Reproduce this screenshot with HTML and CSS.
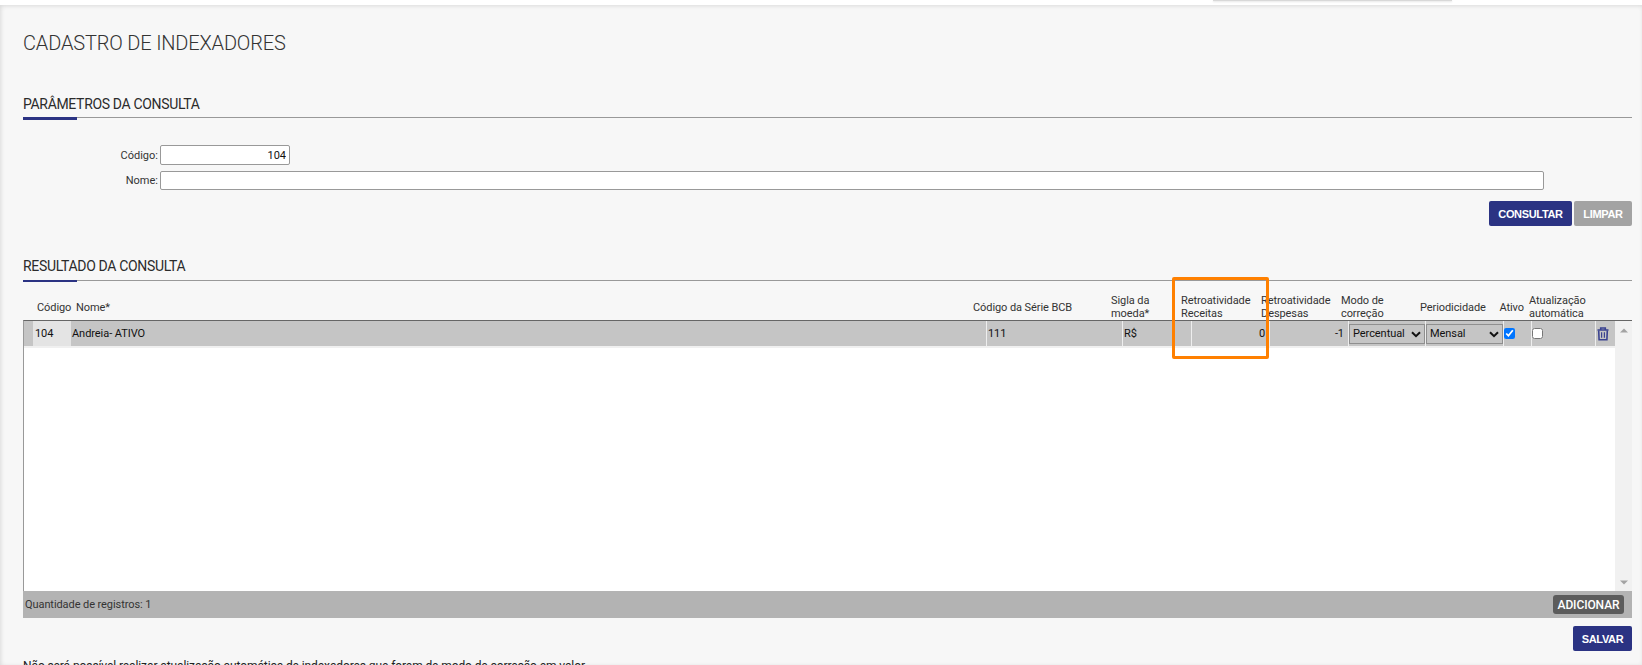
FILE: index.html
```html
<!DOCTYPE html>
<html lang="pt-BR">
<head>
    <meta charset="UTF-8">
    <title>Cadastro de Indexadores</title>
    <link rel="stylesheet" href="styles.css">
</head>
<body>
    <div class="topo"><div class="topo-aba"></div></div>
    <div class="pagina">
        <h1>CADASTRO DE INDEXADORES</h1>

        <h2 class="secao">PARÂMETROS DA CONSULTA</h2>
        <form class="filtros">
            <div class="campo">
                <label for="codigo">Código:</label>
                <input type="text" id="codigo" class="codigo" value="104">
            </div>
            <div class="campo">
                <label for="nome">Nome:</label>
                <input type="text" id="nome" class="nome">
            </div>
            <div class="botoes">
                <button type="button" class="botao consultar">CONSULTAR</button>
                <button type="button" class="botao limpar">LIMPAR</button>
            </div>
        </form>

        <h2 class="secao resultado">RESULTADO DA CONSULTA</h2>
        <div class="tabela">
            <div class="cabecalho">
                <span>Código</span>
                <span>Nome*</span>
                <span>Código da Série BCB</span>
                <span>Sigla da<br>moeda*</span>
                <span>Retroatividade<br>Receitas</span>
                <span>Retroatividade<br>Despesas</span>
                <span>Modo de<br>correção</span>
                <span>Periodicidade</span>
                <span>Ativo</span>
                <span>Atualização<br>automática</span>
            </div>
            <div class="corpo">
                <div class="linhas">
                    <div class="linha">
                        <div class="marca"></div>
                        <div class="bloqueado">104</div>
                        <div>Andreia- ATIVO</div>
                        <div>111</div>
                        <div>R$</div>
                        <div class="numero">0</div>
                        <div class="numero">-1</div>
                        <div class="lista">
                            <select><option>Percentual</option></select>
                            <svg width="10" height="7" viewBox="0 0 10 7"><path d="M1 1.2l4 4 4-4" fill="none" stroke="#111" stroke-width="2"/></svg>
                        </div>
                        <div class="lista">
                            <select><option>Mensal</option></select>
                            <svg width="10" height="7" viewBox="0 0 10 7"><path d="M1 1.2l4 4 4-4" fill="none" stroke="#111" stroke-width="2"/></svg>
                        </div>
                        <div class="marcador"><input type="checkbox" checked></div>
                        <div class="marcador"><input type="checkbox"></div>
                        <div class="excluir">
                            <svg width="12" height="14" viewBox="0 0 12 14" fill="none" stroke="#3a4290"><path d="M0.5 3h11M3.7 3V1h4.6v2" stroke-width="1.6"/><path d="M1.7 3.5l.4 9.2h7.8l.4-9.2" stroke-width="1.6"/><path d="M4.6 5.2v5.6M7.4 5.2v5.6" stroke-width="1.2"/></svg>
                        </div>
                    </div>
                </div>
                <div class="rolagem">
                    <svg width="8" height="5" viewBox="0 0 8 5"><path d="M0 4.5L4 .5l4 4z" fill="#a3a3a3"/></svg>
                    <svg width="8" height="5" viewBox="0 0 8 5"><path d="M0 .5l4 4 4-4z" fill="#a3a3a3"/></svg>
                </div>
            </div>
            <div class="rodape">
                <span>Quantidade de registros: 1</span>
                <button type="button" class="adicionar">ADICIONAR</button>
            </div>
            <div class="destaque"></div>
        </div>
        <div class="acoes">
            <button type="button" class="botao salvar">SALVAR</button>
        </div>
        <p class="aviso">Não será possível realizar atualização automática de indexadores que forem de modo de correção em valor.</p>
    </div>
</body>
</html>
```

FILE: styles.css
```css
* {
    box-sizing: border-box;
}
body {
    margin: 0;
    height: 665px;
    overflow: hidden;
    background-color: #ffffff;
    font-family: Roboto, Arial, sans-serif;
    font-size: 11px;
    color: #333;
}
.topo {
    height: 5px;
}
.topo-aba {
    width: 239px;
    height: 1px;
    margin-left: 1213px;
    background: #d8d8d8;
    box-shadow: 0 1px 2px #ddd;
}
.pagina {
    height: 660px;
    padding: 25px 10px 0 23px;
    background: #f7f7f7;
    box-shadow: inset 1px 1px 4px rgba(0, 0, 0, 0.12);
    overflow: hidden;
}
h1 {
    margin: 0;
    height: 59px;
    font-size: 20px;
    line-height: 26px;
    font-weight: 300;
    letter-spacing: -0.17px;
}
/* Título com a barra azul sobre a linha */
.secao {
    position: relative;
    margin: 0;
    height: 29px;
    font-size: 14px;
    line-height: 31px;
    font-weight: 400;
    letter-spacing: -0.33px;
    color: #2b2b2b;
    border-bottom: 1px solid #999;
}
.secao::after {
    content: "";
    position: absolute;
    left: 0;
    top: 28px;
    width: 54px;
    height: 3px;
    background: #2b3383;
}
.secao.resultado {
    line-height: 29px;
}
.secao.resultado::after {
    height: 2px;
}
.filtros {
    height: 134px;
    padding-top: 27px;
}
.campo {
    display: flex;
    align-items: center;
    height: 20px;
    margin-bottom: 6px;
}
.campo + .campo {
    height: 19px;
    margin-bottom: 11px;
}
.campo label {
    width: 135px;
    margin-right: 2px;
    text-align: right;
}
.campo input {
    height: 100%;
    padding: 0 3px;
    border: 1px solid #999;
    border-radius: 2px;
    background: #fff;
    font-family: inherit;
    font-size: 11px;
    color: #111;
}
.campo .codigo {
    width: 130px;
    text-align: right;
}
.campo .nome {
    width: 1384px;
}
.botoes {
    display: flex;
    justify-content: flex-end;
    gap: 2px;
}
.botao {
    height: 25px;
    padding: 1px 0 0;
    border: none;
    border-radius: 2px;
    background: #2b3383;
    color: #fff;
    font-family: Arial, "Liberation Sans", sans-serif;
    font-size: 11px;
    font-weight: bold;
    letter-spacing: -0.33px;
}
.consultar {
    width: 83px;
}
.limpar {
    width: 58px;
    background: #a3a3a3;
}
.salvar {
    width: 59px;
}
.tabela {
    position: relative;
}
.cabecalho {
    display: grid;
    grid-template-columns: 39px 897px 138px 70px 80px 80px 79px 79.5px 29.5px 1fr;
    align-items: center;
    height: 39px;
    padding: 13px 0 0 14px;
    line-height: 13px;
    letter-spacing: -0.08px;
    white-space: nowrap;
}
.corpo {
    display: flex;
    height: 271px;
    border-top: 1px solid #666;
    border-left: 1px solid #999;
    background: #fff;
}
.linhas {
    flex: 1;
}
.linha {
    display: grid;
    grid-template-columns: 9px 38px 916px 136px 69px 78px 79px 77px 78px 28px 64px 1fr;
    height: 27px;
    border-bottom: 2px solid #f0f0f0;
    background: #c5c5c5;
    color: #111;
}
.linha > div {
    padding-left: 1px;
    line-height: 25px;
    letter-spacing: -0.06px;
    border-right: 1px solid #eee;
}
.linha > div.marca,
.linha > div.bloqueado {
    border-right: none;
}
.linha > div.bloqueado {
    padding-left: 2px;
    background: #e4e4e4;
}
.linha > div.numero {
    padding-right: 4px;
    text-align: right;
}
.linha > .lista {
    position: relative;
    padding: 3px 0 0;
}
.lista select {
    appearance: none;
    display: block;
    width: 100%;
    height: 20px;
    padding: 0 3px 2px;
    border: 1px solid #8f8f8f;
    border-radius: 0;
    background: transparent;
    font-family: inherit;
    font-size: 11px;
    letter-spacing: -0.06px;
    color: #111;
}
.lista svg {
    position: absolute;
    right: 4px;
    top: 10px;
}
.linha > .marcador {
    padding: 7px 0 0;
}
.marcador input {
    display: block;
    width: 11px;
    height: 11px;
    margin: 0;
}
.linha > .excluir {
    padding: 6px 0 0 1px;
    border-right: none;
}
.excluir svg {
    display: block;
}
.rolagem {
    display: flex;
    flex-direction: column;
    justify-content: space-between;
    align-items: center;
    width: 17px;
    padding: 7px 0 6px;
    background: #f1f1f1;
}
.rodape {
    display: flex;
    justify-content: space-between;
    align-items: center;
    height: 27px;
    padding: 0 8px 0 2px;
    letter-spacing: -0.08px;
    background: #b3b3b3;
}
.adicionar {
    width: 71px;
    height: 19px;
    padding: 0;
    border: none;
    border-radius: 3px;
    background: #5c5c5c;
    color: #fff;
    font-family: inherit;
    font-size: 12px;
    font-weight: 500;
    letter-spacing: -0.1px;
}
/* Moldura sobre a coluna Retroatividade Receitas */
.destaque {
    position: absolute;
    left: 1149px;
    top: -4px;
    width: 97px;
    height: 82px;
    border: 3px solid #ff8000;
    border-radius: 2px;
}
.acoes {
    display: flex;
    justify-content: flex-end;
    padding-top: 8px;
}
.aviso {
    margin: 7px 0 0;
    font-size: 12px;
    line-height: 16px;
    letter-spacing: -0.1px;
    color: #222;
    white-space: nowrap;
}
```
